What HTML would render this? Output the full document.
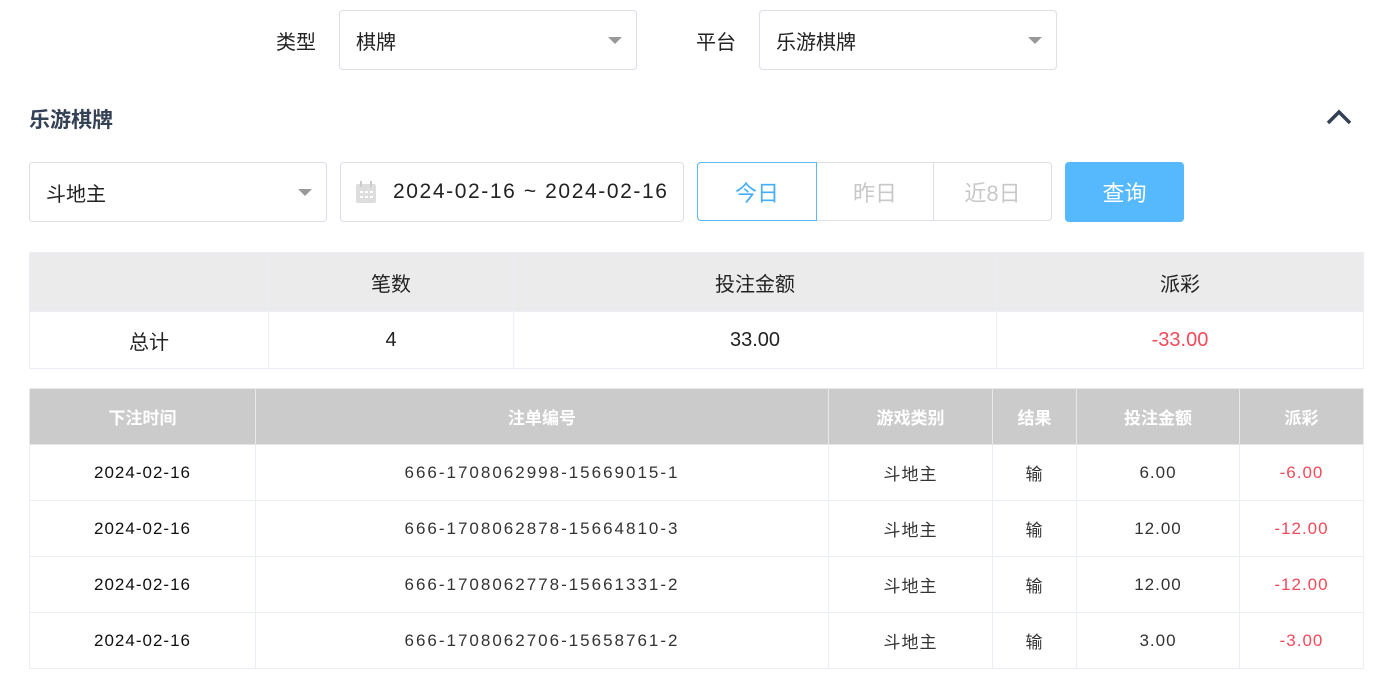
<!DOCTYPE html>
<html><head><meta charset="utf-8"><style>
*{box-sizing:border-box;margin:0;padding:0}
body{width:1387px;height:690px;background:#fff;position:relative;overflow:hidden;font-family:"Liberation Sans","Noto Sans CJK SC",sans-serif;color:#222}
.a{position:absolute}
.sel{position:absolute;border:1px solid #dcdfe6;border-radius:4px;font-size:20px;color:#222;padding-left:16px;display:flex;align-items:center}
.tri{position:absolute;right:14px;top:50%;margin-top:-3px;width:0;height:0;border-left:7px solid transparent;border-right:7px solid transparent;border-top:7px solid #999}
table{position:absolute;border-collapse:collapse;table-layout:fixed}
td{text-align:center;border:1px solid #ebeef5}
.t1 td{font-size:20px;height:57px}
.t1 tr:first-child td{background:#ebebeb;height:59px}
.t2 td{font-size:17px;height:56px;color:#333;letter-spacing:1px}
.t2 td.n{letter-spacing:2px}
.t2 tr:first-child td{background:#cbcbcb;color:#fff;font-weight:bold;border-color:#e8e8e8;letter-spacing:0}
.r{color:#f34a5a!important}
</style></head><body>
<div class="a" style="left:276px;top:26px;font-size:20px">类型</div>
<div class="sel" style="left:339px;top:10px;width:298px;height:60px">棋牌<span class="tri"></span></div>
<div class="a" style="left:696px;top:26px;font-size:20px">平台</div>
<div class="sel" style="left:759px;top:10px;width:298px;height:60px">乐游棋牌<span class="tri"></span></div>
<div class="a" style="left:29px;top:104px;font-size:21px;font-weight:bold;color:#344054">乐游棋牌</div>
<svg class="a" style="left:1325px;top:108px" width="28" height="18"><path d="M3 15 L14 4 L25 15" stroke="#344054" stroke-width="3.5" fill="none"/></svg>
<div class="sel" style="left:29px;top:162px;width:298px;height:60px">斗地主<span class="tri"></span></div>
<div class="sel" style="left:340px;top:162px;width:344px;height:60px;padding-left:14px;font-size:21px;letter-spacing:1.6px">
<svg width="22" height="24" style="margin-right:16px"><rect x="1" y="4" width="20" height="19" rx="2" fill="#ddd"/><rect x="5" y="1" width="2" height="6" fill="#ccc"/><rect x="15" y="1" width="2" height="6" fill="#ccc"/><g fill="#fff"><rect x="5" y="11" width="3" height="2"/><rect x="10" y="11" width="3" height="2"/><rect x="15" y="11" width="3" height="2"/><rect x="5" y="16" width="3" height="2"/><rect x="10" y="16" width="3" height="2"/><rect x="15" y="16" width="3" height="2"/></g></svg>2024-02-16 ~ 2024-02-16</div>
<div class="a" style="left:697px;top:162px;width:355px;height:59px;border:1px solid #dcdfe6;border-radius:4px"></div>
<div class="a" style="left:697px;top:162px;width:120px;height:59px;border:1px solid #5ab8fb;border-radius:4px 0 0 4px;color:#45aefc;font-size:22px;display:flex;align-items:center;justify-content:center">今日</div>
<div class="a" style="left:817px;top:163px;width:117px;height:57px;border-right:1px solid #dcdfe6;color:#c8c8c8;font-size:22px;display:flex;align-items:center;justify-content:center">昨日</div>
<div class="a" style="left:934px;top:163px;width:117px;height:57px;color:#c8c8c8;font-size:22px;display:flex;align-items:center;justify-content:center">近8日</div>
<div class="a" style="left:1065px;top:162px;width:119px;height:60px;background:#57b9fd;border-radius:4px;color:#fff;font-size:22px;display:flex;align-items:center;justify-content:center">查询</div>
<table class="t1" style="left:29px;top:252px;width:1335px">
<colgroup><col style="width:239px"><col style="width:245px"><col style="width:483px"><col></colgroup>
<tr><td></td><td>笔数</td><td>投注金额</td><td>派彩</td></tr>
<tr><td>总计</td><td>4</td><td>33.00</td><td class="r">-33.00</td></tr>
</table>
<table class="t2" style="left:29px;top:388px;width:1335px">
<colgroup><col style="width:226px"><col style="width:573px"><col style="width:164px"><col style="width:84px"><col style="width:163px"><col></colgroup>
<tr><td>下注时间</td><td>注单编号</td><td>游戏类别</td><td>结果</td><td>投注金额</td><td>派彩</td></tr>
<tr><td style="color:#111">2024-02-16</td><td class="n">666-1708062998-15669015-1</td><td>斗地主</td><td>输</td><td>6.00</td><td class="r">-6.00</td></tr>
<tr><td style="color:#111">2024-02-16</td><td class="n">666-1708062878-15664810-3</td><td>斗地主</td><td>输</td><td>12.00</td><td class="r">-12.00</td></tr>
<tr><td style="color:#111">2024-02-16</td><td class="n">666-1708062778-15661331-2</td><td>斗地主</td><td>输</td><td>12.00</td><td class="r">-12.00</td></tr>
<tr><td style="color:#111">2024-02-16</td><td class="n">666-1708062706-15658761-2</td><td>斗地主</td><td>输</td><td>3.00</td><td class="r">-3.00</td></tr>
</table>
</body></html>
